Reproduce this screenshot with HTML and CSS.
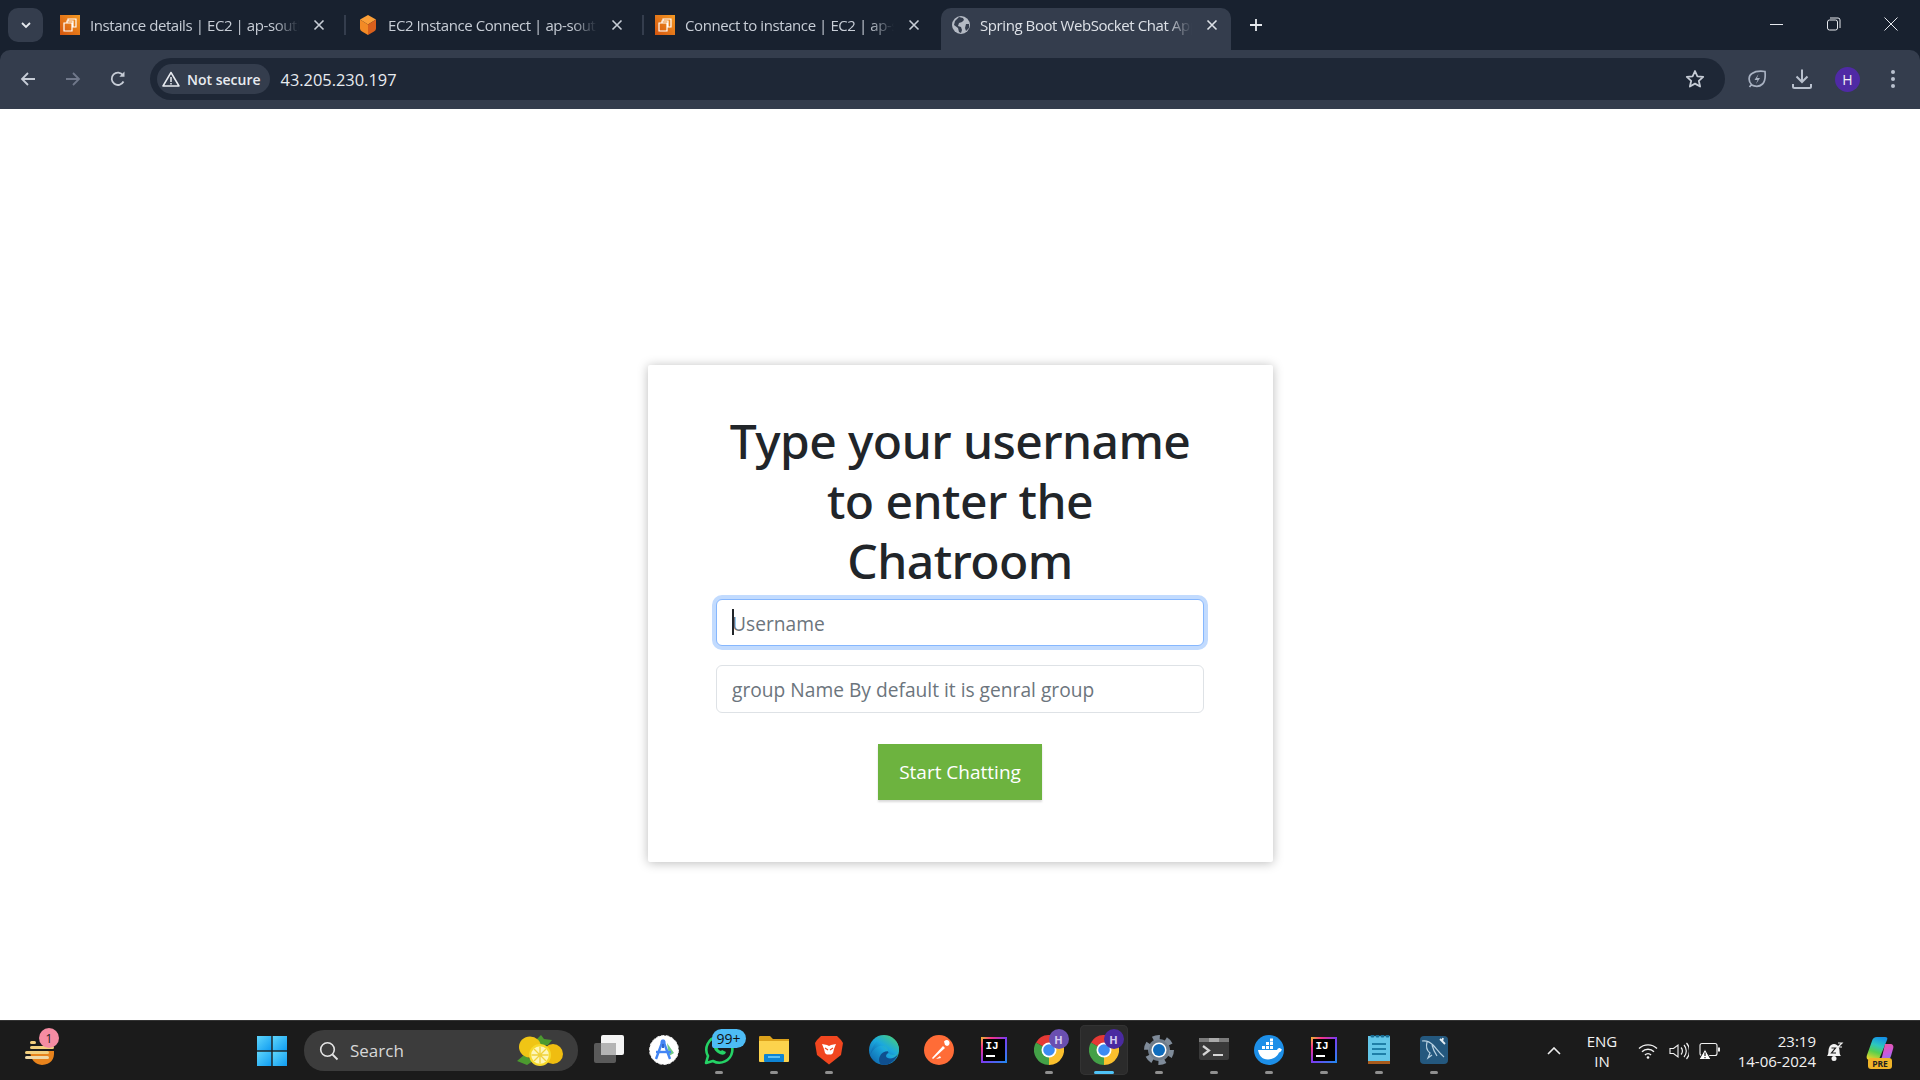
FILE: index.html
```html
<!DOCTYPE html>
<html lang="en">
<head>
<meta charset="utf-8">
<title>Spring Boot WebSocket Chat App</title>
<link rel="stylesheet" href="styles.css">
</head>
<body>
<header class="chrome">
  <div class="tabstrip">
    <div class="tab-search"><svg width="12" height="12" viewBox="0 0 12 12"><path d="M2 4l4 4 4-4" fill="none" stroke="#e6e9ee" stroke-width="1.8"/></svg></div>
    <div class="tab">
      <svg class="fav" width="20" height="20" viewBox="0 0 20 20"><defs><linearGradient id="aws" x1="0" y1="1" x2="1" y2="0"><stop offset="0" stop-color="#d4550f"/><stop offset="1" stop-color="#f59a23"/></linearGradient></defs><rect width="20" height="20" fill="url(#aws)"/><path d="M8 6V4h8v8h-3M4 8h8v8H4zM7 8V6h6v6h-1" fill="none" stroke="#fff" stroke-width="1.2"/></svg>
      <span class="tab-title">Instance details | EC2 | ap-south-1</span>
      <svg class="tab-x" width="20" height="12" viewBox="0 0 20 12"><path d="M5.500 1.500l9 9M14.500 1.500l-9 9" stroke="#c7cdd6" stroke-width="1.600"/></svg>
    </div>
    <i class="tab-sep"></i>
    <div class="tab">
      <svg class="fav" width="20" height="20" viewBox="0 0 20 20"><path d="M10 0l8 4.500-8 5-8-5z" fill="#fb9f38"/><path d="M2 4.500l8 5V20l-6-3.500q-2-1-2-3z" fill="#f38a25"/><path d="M18 4.500l-8 5V20l6-3.500q2-1 2-3z" fill="#d9601c"/></svg>
      <span class="tab-title">EC2 Instance Connect | ap-south-1</span>
      <svg class="tab-x" width="20" height="12" viewBox="0 0 20 12"><path d="M5.500 1.500l9 9M14.500 1.500l-9 9" stroke="#c7cdd6" stroke-width="1.600"/></svg>
    </div>
    <i class="tab-sep"></i>
    <div class="tab tab-third">
      <svg class="fav" width="20" height="20" viewBox="0 0 20 20"><rect width="20" height="20" fill="url(#aws)"/><path d="M8 6V4h8v8h-3M4 8h8v8H4zM7 8V6h6v6h-1" fill="none" stroke="#fff" stroke-width="1.2"/></svg>
      <span class="tab-title">Connect to instance | EC2 | ap-south-1</span>
      <svg class="tab-x" width="20" height="12" viewBox="0 0 20 12"><path d="M5.500 1.500l9 9M14.500 1.500l-9 9" stroke="#c7cdd6" stroke-width="1.600"/></svg>
    </div>
    <div class="tab tab-active">
      <svg class="fav" width="18" height="18" viewBox="0 0 18 18"><circle cx="9" cy="9" r="9" fill="#b4bac4"/><path d="M7 1l4 1 1 2-2 2-3 1-1 3 3 1 1 3-1 3-2-1-1-4-4-3 1-4zM14 8l3 0 0 4-3 3-1-3z" fill="#343d4d"/></svg>
      <span class="tab-title">Spring Boot WebSocket Chat App</span>
      <svg class="tab-x" width="20" height="12" viewBox="0 0 20 12"><path d="M5.500 1.500l9 9M14.500 1.500l-9 9" stroke="#dde1e7" stroke-width="1.600"/></svg>
    </div>
    <div class="tab-new"><svg width="14" height="14" viewBox="0 0 14 14"><path d="M7 1v12M1 7h12" stroke="#e6e9ee" stroke-width="1.8"/></svg></div>
    <div class="win-btns">
      <svg width="14" height="14" viewBox="0 0 14 14"><path d="M0 7.500h13" stroke="#e6e9ee" stroke-width="1"/></svg>
      <svg width="14" height="14" viewBox="0 0 14 14"><rect x=".5" y="3" width="10" height="10" rx="2" fill="none" stroke="#e6e9ee"/><path d="M3 1h8q2 0 2 2v8" fill="none" stroke="#e6e9ee"/></svg>
      <svg width="14" height="14" viewBox="0 0 14 14"><path d="M.5.5l13 13M13.500.5l-13 13" stroke="#e6e9ee" stroke-width="1"/></svg>
    </div>
  </div>
  <div class="toolbar">
    <div class="nav-btn"><svg width="18" height="18" viewBox="0 0 18 18"><path d="M16 9H3M9 3L3 9l6 6" fill="none" stroke="#c6ccd6" stroke-width="1.8"/></svg></div>
    <div class="nav-btn"><svg width="18" height="18" viewBox="0 0 18 18"><path d="M2 9h13M9 3l6 6-6 6" fill="none" stroke="#70788a" stroke-width="1.8"/></svg></div>
    <div class="nav-btn"><svg width="18" height="18" viewBox="0 0 18 18"><path d="M14.500 11.500A6.200 6.200 0 1 1 14 5.200" fill="none" stroke="#c6ccd6" stroke-width="1.8"/><path d="M15.500 1.500v5.200h-5.200z" fill="#c6ccd6"/></svg></div>
    <div class="omnibox">
      <div class="secure">
        <svg width="18" height="16" viewBox="0 0 18 16"><path d="M9 1.500L1 15h16z" fill="none" stroke="#e8ebf0" stroke-width="1.5" stroke-linejoin="round"/><path d="M9 6v5M9 12v1.600" stroke="#e8ebf0" stroke-width="1.5"/></svg>
        <span>Not secure</span>
      </div>
      <span class="url">43.205.230.197</span>
      <svg class="star" width="20" height="20" viewBox="0 0 20 20"><path d="M10 2l2.400 5.300 5.800.6-4.400 3.900 1.300 5.700L10 14.600l-5.100 2.900 1.300-5.700L1.800 7.900l5.800-.6z" fill="none" stroke="#c6ccd6" stroke-width="1.8" stroke-linejoin="round"/></svg>
    </div>
    <div class="tool-icons">
      <svg width="20" height="20" viewBox="0 0 20 20"><path d="M2.500 18l2-2.500C1 12 1.500 6.500 5 4.500 8.500 2 14 2 18 2.500c.5 5 .3 10-2.500 12.500-3 2.800-7.500 2.700-11.500.7" fill="none" stroke="#a9b2c2" stroke-width="1.7"/><path d="M11.500 5L7.500 11h3l-1.500 4 4-6h-3z" fill="#a9b2c2"/></svg>
      <svg width="22" height="22" viewBox="0 0 22 22"><path d="M11 1.500v12M5.500 8.500L11 14l5.500-5.500" fill="none" stroke="#b9c1ce" stroke-width="2"/><path d="M2 16v2.500q0 1.500 1.500 1.500h15q1.500 0 1.500-1.500V16" fill="none" stroke="#b9c1ce" stroke-width="2"/></svg>
      <span class="avatar">H</span>
      <svg width="6" height="20" viewBox="0 0 6 20"><circle cx="3" cy="3" r="2" fill="#b9c1ce"/><circle cx="3" cy="10" r="2" fill="#b9c1ce"/><circle cx="3" cy="17" r="2" fill="#b9c1ce"/></svg>
    </div>
  </div>
</header>

<main class="page">
  <section class="card">
    <h1 class="title">Type your username to enter the Chatroom</h1>
    <div class="field field-focus">
      <input class="input input-focus" type="text" placeholder="Username" aria-label="Username">
      <i class="caret"></i>
    </div>
    <div class="field">
      <input class="input" type="text" placeholder="group Name By default it is genral group" aria-label="Group name">
    </div>
    <button class="start" type="button">Start Chatting</button>
  </section>
</main>

<footer class="taskbar">
  <div class="weather">
    <svg width="32" height="30" viewBox="0 0 32 30"><path d="M6 14h24q1 13-12 14Q7 27 6 14z" fill="#e8831c"/><rect x="6" y="4" width="6" height="3" rx="1.500" fill="#f3cf7d"/><rect x="6" y="9" width="24" height="3" rx="1.500" fill="#f3cf7d"/><rect x="1" y="14" width="24" height="3" rx="1.500" fill="#f3cf7d"/><rect x="1" y="19" width="24" height="3" rx="1.500" fill="#f0d9a8"/></svg>
    <span class="badge-pink">1</span>
  </div>
  <div class="start-btn">
    <svg width="30" height="30" viewBox="0 0 30 30"><defs><linearGradient id="win" x1="0" y1="0" x2="1" y2="1"><stop offset="0" stop-color="#5fd6fb"/><stop offset="1" stop-color="#0f9cf2"/></linearGradient></defs><rect x="0" y="0" width="14.300" height="14.300" fill="url(#win)"/><rect x="15.700" y="0" width="14.300" height="14.300" fill="url(#win)"/><rect x="0" y="15.700" width="14.300" height="14.300" fill="url(#win)"/><rect x="15.700" y="15.700" width="14.300" height="14.300" fill="url(#win)"/></svg>
  </div>
  <div class="search">
    <svg width="20" height="20" viewBox="0 0 20 20"><circle cx="8.500" cy="8.500" r="6.800" fill="none" stroke="#e5e5e5" stroke-width="1.600"/><path d="M13.500 13.500l5 5" stroke="#e5e5e5" stroke-width="1.800"/></svg>
    <span class="search-text">Search</span>
    <svg class="lemon" width="46" height="32" viewBox="0 0 46 32"><path d="M20 4l4-4 3 4 8 1-4 5-8 1zM0 26l7-6 9 6-6 4z" fill="#4c9a2f"/><ellipse cx="13" cy="12" rx="11" ry="10.500" fill="#f0c515"/><ellipse cx="36" cy="19" rx="10" ry="10" fill="#f0bd10"/><circle cx="23" cy="20" r="11" fill="#f7d92a"/><circle cx="23" cy="20" r="8.800" fill="#fdf6b8"/><path d="M23 11.500v17M14.500 20h17M17 14l12 12M29 14L17 26" stroke="#f0d23a" stroke-width="1.300"/></svg>
  </div>
  <div class="apps">
    <div class="app">
      <svg class="ico" width="30" height="30" viewBox="0 0 30 30"><rect x="0" y="8" width="22" height="20" rx="2" fill="#5a5a5a"/><rect x="7" y="0" width="23" height="20" rx="2" fill="#f4f4f4"/><rect x="7" y="8" width="15" height="12" fill="#b4b4b4"/></svg>
    </div>
    <div class="app">
      <svg class="ico" width="30" height="30" viewBox="0 0 30 30"><circle cx="15" cy="15" r="14.500" fill="#fff" stroke="#e8e8e8" stroke-dasharray="3 2"/><path d="M18 8l7 10-5 3z" fill="#6fc98a"/><path d="M14 5L7 24M14 5l7 19" fill="none" stroke="#4285f4" stroke-width="2.400"/><path d="M7 17h15" stroke="#4285f4" stroke-width="2.400"/><circle cx="14" cy="7" r="2.500" fill="#4285f4"/><path d="M14 9v4" stroke="#3367c8" stroke-width="2"/></svg>
    </div>
    <div class="app">
      <span class="ico-wrap">
        <svg class="ico" width="30" height="30" viewBox="0 0 30 30"><path d="M2 28l2-7A13 13 0 1 1 9 26z" fill="none" stroke="#25d366" stroke-width="2.600" stroke-linejoin="round"/><path d="M10 10c-1 3 1 6 4 8 3 2 5 2 7 1l1-2-4-2-1 1q-3-1-4-4l1-1-2-3z" fill="#25d366"/></svg>
        <span class="badge-blue">99+</span>
      </span>
      <i class="pill"></i>
    </div>
    <div class="app">
      <svg class="ico" width="30" height="30" viewBox="0 0 30 30"><path d="M0 2q0-1 1-1h10l3 3h16v6H0z" fill="#dca21b"/><path d="M0 6h30v20q0 1-1 1H1q-1 0-1-1z" fill="#fcd34d"/><rect x="5" y="19" width="20" height="8" rx="1" fill="#0e84d4"/><rect x="9" y="21" width="12" height="2" fill="#5cc0f5"/></svg>
      <i class="pill"></i>
    </div>
    <div class="app">
      <svg class="ico" width="30" height="30" viewBox="0 0 30 30"><path d="M7 1h16l4 4 2 3-2 12-12 9.500L3 20 1 8l2-3z" fill="#f1461f"/><path d="M8 9l5 1 2 1 2-1 5-1-2 5-1 4-3 3h-2l-3-3-1-4z" fill="#fff"/><path d="M11 13l3 2M19 13l-3 2M13 20h4l-2 2z" stroke="#f1461f" stroke-width="1.200" fill="#f1461f"/></svg>
      <i class="pill"></i>
    </div>
    <div class="app">
      <svg class="ico" width="30" height="30" viewBox="0 0 30 30"><defs><linearGradient id="edge" x1="0" y1="1" x2="1" y2="0"><stop offset="0" stop-color="#0c59a4"/><stop offset=".5" stop-color="#1ba8de"/><stop offset="1" stop-color="#50d46c"/></linearGradient></defs><circle cx="15" cy="15" r="15" fill="url(#edge)"/><path d="M29 19c-2 6-8 11-14 11-5 0-6-5-4-9 2-5 9-6 13-3-3-1-7 0-7 3 0 3 8 4 12-2z" fill="#0f4f8f"/><path d="M30 15c0 2-2 5-5 5-3 0-6-1-6-4 0-4-4-6-8-5-5 1-9 6-10 10 2-11 9-20 15-20 8 0 14 6 14 14z" fill="url(#edge)"/></svg>
    </div>
    <div class="app">
      <svg class="ico" width="30" height="30" viewBox="0 0 30 30"><circle cx="15" cy="15" r="15" fill="#ff6c37"/><path d="M8 23L19 11l2 2L9 24zM20 6.500a3 3 0 1 1 3 4.500l-2-1z" fill="#fff"/><path d="M12 24l4-3 1 2z" fill="#fff"/></svg>
    </div>
    <div class="app">
      <span class="ij"><span class="ij-inner"><b>IJ</b><i class="ij-bar"></i></span></span>
    </div>
    <div class="app">
      <span class="ico-wrap">
        <svg class="ico" width="30" height="30" viewBox="0 0 30 30"><path d="M2 7.500a15 15 0 0 1 26 0L15 15z" fill="#e53935"/><path d="M28 7.500A15 15 0 0 1 15 30L15 15z" fill="#fbc02d"/><path d="M15 30A15 15 0 0 1 2 7.500L15 15z" fill="#43a047"/><circle cx="15" cy="15" r="7.500" fill="#fff"/><circle cx="15" cy="15" r="5.800" fill="#3d8bf2"/></svg>
        <span class="badge-h">H</span>
      </span>
      <i class="pill"></i>
    </div>
    <div class="app app-active">
      <span class="ico-wrap">
        <svg class="ico" width="30" height="30" viewBox="0 0 30 30"><path d="M2 7.500a15 15 0 0 1 26 0L15 15z" fill="#e53935"/><path d="M28 7.500A15 15 0 0 1 15 30L15 15z" fill="#fbc02d"/><path d="M15 30A15 15 0 0 1 2 7.500L15 15z" fill="#43a047"/><circle cx="15" cy="15" r="7.500" fill="#fff"/><circle cx="15" cy="15" r="5.800" fill="#3d8bf2"/></svg>
        <span class="badge-h badge-h-dark">H</span>
      </span>
      <i class="pill pill-active"></i>
    </div>
    <div class="app">
      <svg class="ico" width="30" height="30" viewBox="0 0 30 30"><circle cx="15" cy="15" r="11" fill="#6f7c8a" /><circle cx="15" cy="15" r="12.500" fill="none" stroke="#7f8b99" stroke-width="5" stroke-dasharray="7 6.090"/><circle cx="15" cy="15" r="7.500" fill="#fff"/><circle cx="15" cy="15" r="6" fill="#0f6cbd"/></svg>
      <i class="pill"></i>
    </div>
    <div class="app">
      <svg class="ico" width="30" height="30" viewBox="0 0 30 30"><rect y="3" width="30" height="22" rx="2" fill="#3a3a3a"/><rect y="3" width="30" height="4" fill="#7b7b7b"/><rect x="10" y="3" width="10" height="4" fill="#aaa"/><path d="M4 11l6 4.500L4 20" fill="none" stroke="#d5d5d5" stroke-width="2.200"/><rect x="14" y="19" width="10" height="2" fill="#d5d5d5"/></svg>
      <i class="pill"></i>
    </div>
    <div class="app">
      <svg class="ico" width="30" height="30" viewBox="0 0 30 30"><circle cx="15" cy="15" r="15" fill="#1d8fe8"/><path d="M4 15h19c1-2 2-2 3-2l1 1 1 .5c-1 2-2 3-3 3-2 5-7 7-11 7-6 0-9-4-10-9.500z" fill="#fff"/><path d="M8 11h3v3H8zM12 11h3v3h-3zM16 11h3v3h-3zM12 7h3v3h-3zM16 7h3v3h-3zM16 3.500h3v3h-3z" fill="#fff"/></svg>
      <i class="pill"></i>
    </div>
    <div class="app">
      <span class="ij"><span class="ij-inner"><b>IJ</b><i class="ij-bar"></i></span></span>
      <i class="pill"></i>
    </div>
    <div class="app">
      <svg class="ico" width="30" height="30" viewBox="0 0 30 30"><rect x="4" y="1" width="22" height="28" fill="#63c6e8"/><rect x="4" y="26" width="22" height="3" fill="#a85a1c"/><path d="M8 1h1M13 1h1M18 1h1M23 1h1" stroke="#1a6f96" stroke-width="3" stroke-linecap="round"/><path d="M8 9h14M8 14h14M8 19h14" stroke="#1f7fa8" stroke-width="2"/></svg>
      <i class="pill"></i>
    </div>
    <div class="app">
      <svg class="ico" width="30" height="30" viewBox="0 0 30 30"><rect x="1" y="1" width="28" height="28" rx="4" fill="#24587e"/><path d="M3 6c5-1 8 1 11 4 3 3 6 8 11 12M8 7c-1 4-1 8 3 11l-2 5 4-3M13 10c1 4 3 8 5 11" fill="none" stroke="#b9d2e2" stroke-width="1.200"/><path d="M21 4l5 5M24 3l-1 4" stroke="#e6eef3" stroke-width="1.800"/></svg>
      <i class="pill"></i>
    </div>
  </div>
  <div class="tray">
    <div class="tray-chev"><svg width="14" height="8" viewBox="0 0 14 8"><path d="M1 7l6-6 6 6" fill="none" stroke="#eee" stroke-width="1.600"/></svg></div>
    <div class="tray-lang"><span>ENG</span><span>IN</span></div>
    <div class="tray-ico tray-wifi"><svg width="20" height="16" viewBox="0 0 20 16"><path d="M1 5.500a13 13 0 0 1 18 0M4 8.800a8.500 8.500 0 0 1 12 0M7 12a4 4 0 0 1 6 0" fill="none" stroke="#f2f2f2" stroke-width="1.400"/><circle cx="10" cy="14.500" r="1.300" fill="#f2f2f2"/></svg></div>
    <div class="tray-ico tray-vol"><svg width="20" height="18" viewBox="0 0 20 18"><path d="M1 6.500h3.500L9 3v12l-4.500-3.500H1z" fill="none" stroke="#f2f2f2" stroke-width="1.100"/><path d="M12 5.500a5 5 0 0 1 0 7M15 3a9 9 0 0 1 0 12M17.500 1a12 12 0 0 1 0 16" fill="none" stroke="#f2f2f2" stroke-width="1.200"/></svg></div>
    <div class="tray-ico tray-batt"><svg width="22" height="18" viewBox="0 0 22 18"><rect x="1" y="1.500" width="17" height="12" rx="2" fill="none" stroke="#f2f2f2" stroke-width="1.100"/><rect x="19" y="5.500" width="2" height="4" fill="#f2f2f2"/><path d="M6 7l6 10.500H0z" fill="#fff" stroke="#1b1b1b"/><path d="M6 10.500v3.500M6 15v1.300" stroke="#1b1b1b" stroke-width="1.200"/></svg></div>
    <div class="tray-clock"><span>23:19</span><span>14-06-2024</span></div>
    <div class="tray-bell"><svg width="20" height="22" viewBox="0 0 20 22"><path d="M2 16c2-2 1-5 2-8 1-3 3-4 5-4s4 1 5 4c1 3 0 6 2 8z" fill="#f2f2f2"/><circle cx="9" cy="18.500" r="2.500" fill="#f2f2f2"/><path d="M6.500 8h4l-4 5h4.500" fill="none" stroke="#1b1b1b" stroke-width="1.200"/><path d="M13 3h4l-4 4h4" fill="none" stroke="#f2f2f2" stroke-width="1.200"/></svg></div>
    <div class="tray-copilot">
      <svg width="28" height="24" viewBox="0 0 28 24"><defs><linearGradient id="cpa" x1=".6" y1="0" x2=".3" y2="1"><stop offset="0" stop-color="#1593e6"/><stop offset=".35" stop-color="#2cc7c0"/><stop offset=".65" stop-color="#57cf4f"/><stop offset="1" stop-color="#e8d42a"/></linearGradient><linearGradient id="cpb" x1=".3" y1="0" x2=".7" y2="1"><stop offset="0" stop-color="#f0569a"/><stop offset=".6" stop-color="#c95ae0"/><stop offset="1" stop-color="#7f7cf0"/></linearGradient></defs><path d="M11 0h8c2 0 3 1 2 3l-7 17q-1 3-4 3H4c-3 0-4-2-3-5L6 4q1-4 5-4z" fill="url(#cpa)"/><path d="M19 7h5c3 0 4 2 3 5l-2 7q-1 4-5 4h-8c2 0 3-1 4-3z" fill="url(#cpb)"/></svg>
      <span class="pre">PRE</span>
    </div>
  </div>
</footer>
</body>
</html>
```
FILE: styles.css
```css
* { box-sizing: border-box; }
html, body { margin: 0; height: 100%; }
body { display: flex; flex-direction: column; width: 1920px; height: 1080px; overflow: hidden; background: #fff; font-family: "Open Sans", "Noto Sans", sans-serif; }

.chrome { flex: 0 0 109px; background: #18212f; display: flex; flex-direction: column; color: #c7cdd6; }
.tabstrip { flex: 0 0 50px; display: flex; align-items: flex-end; padding-left: 8px; }
.tab-search { flex: 0 0 35px; height: 34px; margin-bottom: 8px; margin-right: 7px; background: #343d4d; border-radius: 10px; display: flex; align-items: center; justify-content: center; }
.tab { flex: 0 0 291px; min-width: 0; height: 42px; padding: 0 12px 8px 10px; display: flex; align-items: center; gap: 10px; }
.tab-sep { flex: 0 0 2px; height: 20px; margin: 0 2px 15px 3px; background: #343d4d; }
.tab-third { margin-left: -1px; }
.fav { flex: none; }
.tab-title { flex: 1; min-width: 0; white-space: nowrap; overflow: hidden; font-size: 15px; letter-spacing: -.42px; -webkit-mask-image: linear-gradient(90deg, #000 88%, transparent 100%); mask-image: linear-gradient(90deg, #000 88%, transparent 100%); }
.tab-x { flex: none; }
.tab-active { flex: 0 0 290px; background: #343d4d; border-radius: 10px 10px 0 0; margin-left: 5px; padding: 0 9px 8px 11px; color: #dde1e7; }
.tab-new { flex: 0 0 50px; height: 42px; padding-bottom: 8px; display: flex; align-items: center; justify-content: center; }
.win-btns { margin-left: auto; align-self: stretch; display: flex; align-items: center; gap: 43px; padding: 0 22px 2px 0; }

.toolbar { flex: 0 0 59px; background: #343d4d; border-radius: 10px 10px 0 0; display: flex; align-items: center; padding: 0 0 1px 5px; }
.nav-btn { flex: 0 0 45px; height: 36px; display: flex; align-items: center; justify-content: center; }
.omnibox { flex: 0 0 1575px; margin-left: 10px; height: 42px; background: #1e2736; border-radius: 21px; display: flex; align-items: center; padding: 0 20px 0 7px; }
.secure { height: 30px; padding: 0 9px 0 5px; background: #343d4d; border-radius: 15px; display: flex; align-items: center; gap: 7px; font-size: 14px; font-weight: 600; color: #e8ebf0; }
.url { margin-left: 11px; font-size: 16.400px; color: #e8ebf0; }
.star { margin-left: auto; }
.tool-icons { flex: 1; display: flex; align-items: center; padding-left: 22px; }
.tool-icons svg:nth-child(2) { margin-left: 24px; }
.avatar { width: 25px; height: 25px; margin-left: 22px; border-radius: 50%; background: #4f2aa5; color: #f2f2f2; font-size: 14px; font-weight: 500; display: flex; align-items: center; justify-content: center; }
.tool-icons svg:last-child { margin-left: 30px; }

.page { flex: 1; min-height: 0; background: #fff; display: flex; justify-content: center; align-items: flex-start; padding: 256px 0 0 1px; }
.card { width: 625px; height: 497px; background: #fff; border-radius: 2px; box-shadow: 0 1px 11px rgba(0, 0, 0, .27); padding: 46px 69px 0 68px; display: flex; flex-direction: column; align-items: center; }
.title { margin: 0 0 8px; width: 100%; text-align: center; font-family: "Noto Sans", "Open Sans", sans-serif; font-size: 48px; line-height: 60px; font-weight: 500; color: #212529; letter-spacing: -.55px; }
.field { position: relative; width: 100%; height: 48px; margin-bottom: 18px; }
.field-focus { height: 47px; margin-bottom: 19px; }
.input { display: block; width: 100%; height: 100%; padding: 0 15px; border: 1px solid #dee2e6; border-radius: 6px; background: #fff; outline: 0; font: inherit; font-size: 19.200px; color: #212529; }
.field-focus .input { padding-top: 2px; }
.input::placeholder { color: #6c757d; opacity: 1; }
.input-focus { border-color: #86b7fe; box-shadow: 0 0 0 4px #c2dbfe; }
.caret { position: absolute; left: 16px; top: 10px; width: 2px; height: 26px; background: #212529; }
.start { margin-top: 13px; width: 164px; height: 56px; border: 0; background: #6db33f; color: #fff; font: inherit; font-size: 19px; box-shadow: 0 2px 2px rgba(0, 0, 0, .15); }

.taskbar { flex: 0 0 60px; background: #1b1b1b; border-top: 1px solid #333; display: flex; align-items: stretch; color: #f2f2f2; }
.weather { position: relative; flex: 0 0 80px; display: flex; align-items: center; justify-content: center; padding-top: 2px; }
.badge-pink { position: absolute; left: 39px; top: 7px; width: 20px; height: 20px; border-radius: 50%; background: #f58ca3; color: #222; font-size: 12px; display: flex; align-items: center; justify-content: center; }
.start-btn { flex: 0 0 44px; margin-left: 170px; display: flex; align-items: center; justify-content: center; }
.search { flex: 0 0 274px; margin: 9px 0 9px 10px; background: #3c3c3c; border-radius: 20px; display: flex; align-items: center; padding: 0 15px 0 15px; }
.search-text { margin-left: 11px; font-size: 17px; color: #d8d8d8; }
.lemon { margin-left: auto; }
.apps { display: flex; margin-left: 3px; }
.app { flex: none; width: 48px; height: 50px; margin: 4px 3.500px 0; padding-top: 10px; border-radius: 5px; display: flex; flex-direction: column; align-items: center; gap: 6px; }
.app-active { background: #2b2b2b; box-shadow: inset 0 0 0 1px #333; }
.ico { display: block; }
.ico-wrap { position: relative; display: block; width: 30px; height: 30px; }
.pill { width: 8px; height: 3px; border-radius: 2px; background: #8f8f8f; }
.pill-active { width: 20px; background: #4fc3f7; }
.badge-blue { position: absolute; left: 8px; top: -6px; width: 34px; height: 19px; border-radius: 10px 10px 10px 3px; background: #4dbcf5; color: #111; font-size: 14px; display: flex; align-items: center; justify-content: center; }
.badge-h { position: absolute; left: 15px; top: -6px; width: 20px; height: 20px; border-radius: 50%; background: #6a4fb0; color: #d6ccf0; font-size: 11px; font-weight: 700; display: flex; align-items: center; justify-content: center; }
.badge-h-dark { background: #4a2aa0; }
.ij { display: block; width: 26px; height: 26px; margin: 2px 0; padding: 2px; background: linear-gradient(135deg, #f0c02a 0%, #f5318a 22%, #7b3bf0 50%, #1e8cf0 100%); }
.ij-inner { display: flex; flex-direction: column; width: 100%; height: 100%; background: #000; padding: 2px 3px; }
.ij-inner b { font-family: "Liberation Mono", monospace; font-size: 11px; line-height: 11px; color: #fff; }
.ij-bar { width: 9px; height: 2px; margin-top: 3px; background: #fff; }

.tray { margin-left: auto; display: flex; align-items: center; padding-right: 20px; }
.tray-chev { flex: 0 0 40px; display: flex; justify-content: center; }
.tray-lang { flex: 0 0 56px; display: flex; flex-direction: column; align-items: center; font-size: 15px; line-height: 20px; }
.tray-ico { display: flex; justify-content: center; flex: 0 0 31px; }
.tray-wifi { margin-left: 2px; }
.tray-clock { flex: 0 0 91px; display: flex; flex-direction: column; align-items: flex-end; font-size: 15px; line-height: 20px; }
.tray-bell { flex: 0 0 30px; margin-left: 4px; display: flex; justify-content: center; }
.tray-copilot { position: relative; flex: 0 0 40px; height: 40px; margin-left: 10px; display: flex; justify-content: center; padding-top: 6px; }
.pre { position: absolute; left: 8px; bottom: 2px; width: 24px; height: 11px; border-radius: 3px; background: #f0b429; color: #222; font-size: 8.500px; font-weight: 700; line-height: 11px; text-align: center; }
```
